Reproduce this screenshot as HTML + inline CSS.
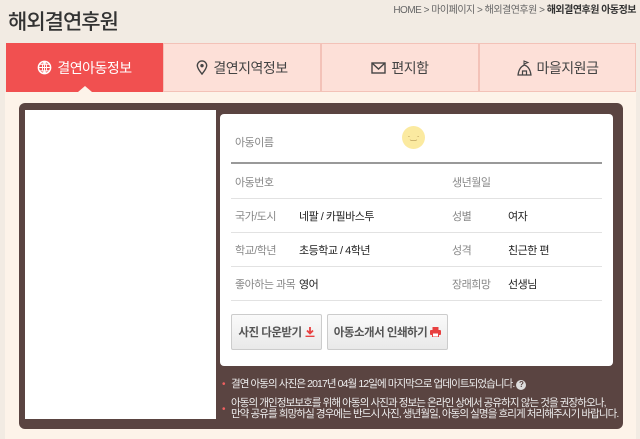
<!DOCTYPE html>
<html><head><meta charset="utf-8"><style>
*{margin:0;padding:0;box-sizing:border-box}
body{width:640px;height:439px;overflow:hidden;background:#f2ebe3;font-family:"Liberation Sans","Noto Sans CJK KR",sans-serif;position:relative;color:#333}
.a{position:absolute}
.title{left:8px;top:6px;font-size:21px;color:#333;letter-spacing:-1px;font-weight:500}
.bc{right:4px;top:1px;font-size:10px;color:#666;letter-spacing:-.5px}
.bc b{color:#333}
.tab{top:43px;height:49px;background:#fde0d8;border:1px solid #f3c2b8;font-size:14px;color:#444;display:flex;align-items:center;justify-content:center;gap:5px;letter-spacing:-.5px}
.tab.on{background:#f15050;color:#fff;border-color:#f15050}
.cream{left:5px;top:92px;width:631px;height:347px;background:#fdf3e9}
.panel{left:19px;top:103px;width:604px;height:326px;background:#5a4441;border-radius:6px}
.photo{left:25px;top:110px;width:191px;height:309px;background:#fff}
.card{left:220px;top:114px;width:393px;height:252px;background:#fff;border-radius:4px}
.l{font-size:11px;color:#888;letter-spacing:-.5px}
.v{font-size:11px;color:#222;letter-spacing:-.5px}
.hr{left:231px;width:371px;height:1px;background:#e2e2e2}
.btn{top:314px;height:36px;background:linear-gradient(#fafafa,#e9e9e9);border:1px solid #ccc;border-radius:2px;font-size:11.5px;font-weight:bold;color:#555;display:flex;align-items:center;justify-content:center;gap:3px;letter-spacing:-.5px}
.n{font-size:10.5px;color:#eee;letter-spacing:-.9px;line-height:11px;white-space:nowrap}
.dot{color:#f06060;font-size:10px;position:absolute;left:-9px}
</style></head><body>
<div class="a title">해외결연후원</div>
<div class="a bc">HOME &gt; 마이페이지 &gt; 해외결연후원 &gt; <b>해외결연후원 아동정보</b></div>
<div class="a tab on" style="left:6px;width:157px"><svg width="15" height="15" viewBox="0 0 16 16"><circle cx="8" cy="8" r="6.5" fill="none" stroke="#fff" stroke-width="1.6"/><path d="M1.5 8h13M8 1.5v13M3 4.5h10M3 11.5h10M8 1.5c-3 3-3 10 0 13M8 1.5c3 3 3 10 0 13" stroke="#fff" stroke-width="1" fill="none"/></svg>결연아동정보</div>
<div class="a" style="left:78px;top:86px;width:0;height:0;border-left:7px solid transparent;border-right:7px solid transparent;border-bottom:6px solid #fdf3e9"></div>
<div class="a tab" style="left:163px;width:158px"><svg width="12" height="15" viewBox="0 0 12 16"><path d="M6 15C2 10 1 8 1 6a5 5 0 0110 0c0 2-1 4-5 9z" fill="none" stroke="#444" stroke-width="1.5"/><circle cx="6" cy="6" r="1.8" fill="#444"/></svg>결연지역정보</div>
<div class="a tab" style="left:321px;width:158px"><svg width="15" height="12" viewBox="0 0 15 12"><rect x="1" y="1" width="13" height="10" fill="none" stroke="#444" stroke-width="1.4"/><path d="M1 1l6.5 6 6.5-6" fill="none" stroke="#444" stroke-width="1.4"/></svg>편지함</div>
<div class="a tab" style="left:479px;width:157px"><svg width="15" height="16" viewBox="0 0 15 16"><path d="M7 5V1l4 1.5-4 1.5" fill="none" stroke="#444"/><path d="M1 15Q2 7 7.5 5 13 7 14 15z M5.5 15v-4h4v4" fill="none" stroke="#444" stroke-width="1.2"/></svg>마을지원금</div>
<div class="a cream"></div>
<div class="a panel"></div>
<div class="a photo"></div>
<div class="a card"></div>
<div class="a l" style="left:235px;top:134px">아동이름</div>
<div class="a" style="left:402px;top:126px;width:23px;height:23px;border-radius:50%;background:#fbeaa0;font-size:8px;color:#a08040;text-align:center;line-height:21px">·‿·</div>
<div class="a" style="left:231px;top:162px;width:371px;height:2px;background:#999"></div>
<div class="a l" style="left:235px;top:174px">아동번호</div><div class="a l" style="left:452px;top:174px">생년월일</div>
<div class="a hr" style="top:198px"></div>
<div class="a l" style="left:235px;top:208px">국가/도시</div><div class="a v" style="left:299px;top:208px">네팔 / 카필바스투</div><div class="a l" style="left:452px;top:208px">성별</div><div class="a v" style="left:508px;top:208px">여자</div>
<div class="a hr" style="top:232px"></div>
<div class="a l" style="left:235px;top:242px">학교/학년</div><div class="a v" style="left:299px;top:242px">초등학교 / 4학년</div><div class="a l" style="left:452px;top:242px">성격</div><div class="a v" style="left:508px;top:242px">친근한 편</div>
<div class="a hr" style="top:266px"></div>
<div class="a l" style="left:235px;top:276px">좋아하는 과목</div><div class="a v" style="left:299px;top:276px">영어</div><div class="a l" style="left:452px;top:276px">장래희망</div><div class="a v" style="left:508px;top:276px">선생님</div>
<div class="a hr" style="top:300px"></div>
<div class="a btn" style="left:231px;width:91px">사진 다운받기<svg width="10" height="10" viewBox="0 0 10 10"><path d="M5 0v6M2 3.5L5 6.5 8 3.5M0.5 9.5h9" stroke="#e84040" stroke-width="1.8" fill="none"/></svg></div>
<div class="a btn" style="left:327px;width:121px">아동소개서 인쇄하기<svg width="11" height="10" viewBox="0 0 11 10"><rect x="2.5" y="0" width="6" height="3" fill="#e84040"/><rect x="0" y="3" width="11" height="5" rx="1" fill="#e84040"/><rect x="2.5" y="6" width="6" height="4" fill="#fff" stroke="#e84040"/></svg></div>
<div class="a n" style="left:231px;top:379px"><span class="dot">•</span>결연 아동의 사진은 2017년 04월 12일에 마지막으로 업데이트되었습니다. <span style="display:inline-block;width:10px;height:10px;border-radius:50%;background:#ddd;color:#5a4441;font-size:8px;text-align:center;line-height:10px;font-weight:bold;letter-spacing:0">?</span></div>
<div class="a n" style="left:231px;top:398px"><span class="dot" style="top:6px">•</span>아동의 개인정보보호를 위해 아동의 사진과 정보는 온라인 상에서 공유하지 않는 것을 권장하오나,<br>만약 공유를 희망하실 경우에는 반드시 사진, 생년월일, 아동의 실명을 흐리게 처리해주시기 바랍니다.</div>
</body></html>
